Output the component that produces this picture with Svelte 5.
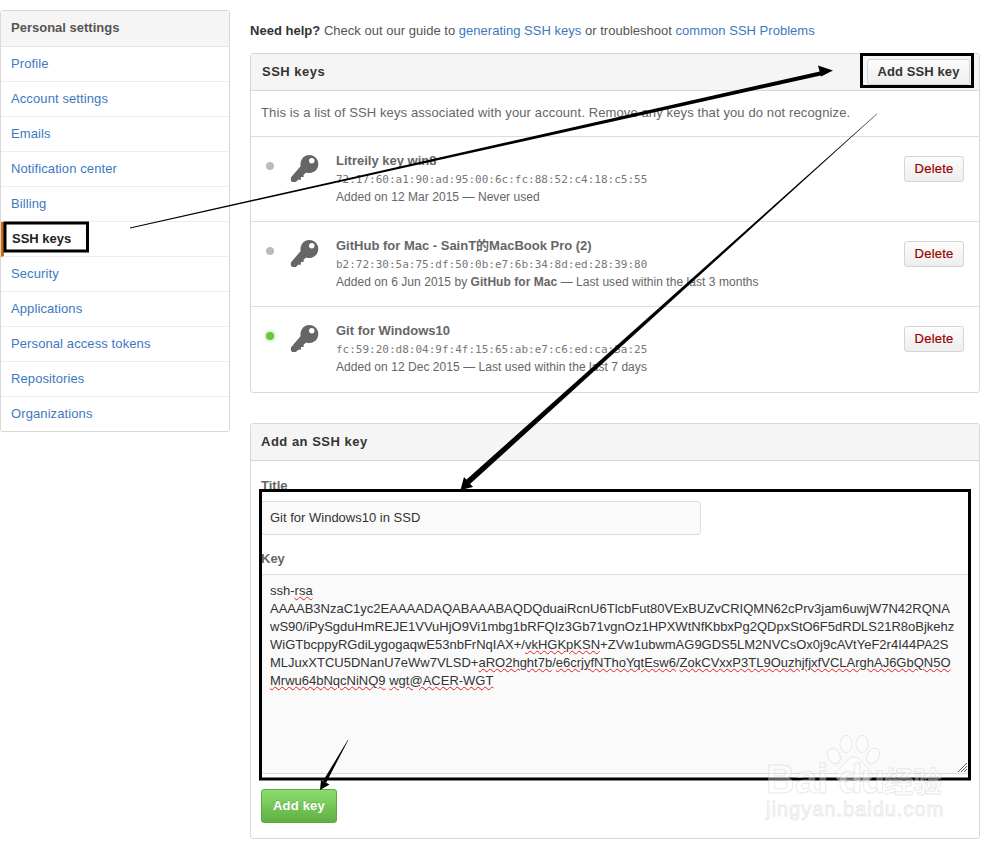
<script lang="ts">
  const navItems = [
    'Profile',
    'Account settings',
    'Emails',
    'Notification center',
    'Billing',
    'SSH keys',
    'Security',
    'Applications',
    'Personal access tokens',
    'Repositories',
    'Organizations',
  ];

  const keys = [
    { title: 'Litreily key win8', print: '72:17:60:a1:90:ad:95:00:6c:fc:88:52:c4:18:c5:55', before: 'Added on 12 Mar 2015 — Never used', by: '', after: '', active: false },
    { title: 'GitHub for Mac - SainT的MacBook Pro (2)', print: 'b2:72:30:5a:75:df:50:0b:e7:6b:34:8d:ed:28:39:80', before: 'Added on 6 Jun 2015 by ', by: 'GitHub for Mac', after: ' — Last used within the last 3 months', active: false },
    { title: 'Git for Windows10', print: 'fc:59:20:d8:04:9f:4f:15:65:ab:e7:c6:ed:ca:5a:25', before: 'Added on 12 Dec 2015 — Last used within the last 7 days', by: '', after: '', active: true },
  ];
</script>

<div class="page">
  <nav class="side">
    <h3>Personal settings</h3>
    {#each navItems as item}
      <a href="#top" class:selected={item === 'SSH keys'}>{item}</a>
    {/each}
  </nav>

  <main>
    <p class="help">
      <strong>Need help?</strong> Check out our guide to <a href="#top">generating SSH keys</a> or troubleshoot <a href="#top">common SSH Problems</a>
    </p>

    <section class="panel keys">
      <header>
        <h3>SSH keys</h3>
        <button class="btn add">Add SSH key</button>
      </header>
      <p class="intro">This is a list of SSH keys associated with your account. Remove any keys that you do not recognize.</p>
      {#each keys as key}
        <div class="key-row">
          <span class="dot" class:on={key.active}></span>
          <svg class="key-icon" viewBox="0 0 32 32">
            <path d="M21 1a10 10 0 1 1-3.200 19.400L15 23v2.500h-3V28.500H9L6.500 31H2.500L1 29.500V26L11.800 13.200A10 10 0 0 1 21 1z" fill="#666" />
            <circle cx="24" cy="7.500" r="3" fill="#fff" />
          </svg>
          <div class="key-info">
            <strong>{key.title}</strong>
            <code>{key.print}</code>
            <span class="meta">{key.before}{#if key.by}<b>{key.by}</b>{/if}{key.after}</span>
          </div>
          <button class="btn delete">Delete</button>
        </div>
      {/each}
    </section>

    <section class="panel form">
      <header>
        <h3>Add an SSH key</h3>
      </header>
      <div class="fields">
        <label for="key-title">Title</label>
        <input id="key-title" type="text" value="Git for Windows10 in SSD" />
        <span class="label">Key</span>
        <div class="textarea">
          <div>ssh-<u>rsa</u></div>
          <div>AAAAB3NzaC1yc2EAAAADAQABAAABAQDQduaiRcnU6TlcbFut80VExBUZvCRIQMN62cPrv3jam6uwjW7N42RQNA</div>
          <div>wS90/iPySgduHmREJE1VVuHjO9Vi1mbg1bRFQIz3Gb71vgnOz1HPXWtNfKbbxPg2QDpxStO6F5dRDLS21R8oBjkehz</div>
          <div>WiGTbcppyRGdiLygogaqwE53nbFrNqIAX+/<u>vkHGKpKSN</u>+ZVw1ubwmAG9GDS5LM2NVCsOx0j9cAVtYeF2r4I44PA2S</div>
          <div>MLJuxXTCU5DNanU7eWw7VLSD+<u>aRO2hght7b</u>/<u>e6crjyfNThoYqtEsw6</u>/<u>ZokCVxxP3TL9OuzhjfjxfVCLArghAJ6GbQN5O</u></div>
          <div><u>Mrwu64bNqcNiNQ9</u> <u>wgt@ACER-WGT</u></div>
          <svg class="grip" viewBox="0 0 10 10">
            <path d="M10 1 1 10M10 4 4 10M10 7 7 10" stroke="#666" stroke-width="1" fill="none" />
          </svg>
        </div>
        <button class="btn green">Add key</button>
      </div>
    </section>
  </main>

  <!-- annotations drawn on top of the screenshot -->
  <svg class="marks" viewBox="0 0 999 843">
    <rect x="5" y="223" width="82.500" height="28" />
    <rect x="861.500" y="54.500" width="111" height="32" />
    <rect x="260.500" y="490.500" width="709" height="288.500" />
    <polygon class="ink" points="130,227.500 130,228.500 823,75 822,71" />
    <polygon class="ink" points="833,70.500 818,65.500 821,76.500" />
    <polygon class="thin" points="877,113.500 877.300,113.800 470,484 466,480" />
    <polygon class="ink" points="460.500,490 464,477 473,487" />
    <polygon class="thin" points="347.800,740 348.200,740.300 326,783 323,781" />
    <polygon class="ink" points="320,790 321,780 329.500,784.500" />
  </svg>

  <div class="baidu">
    <div class="mark">
      <span>Bai</span>
      <svg viewBox="0 0 54 50">
        <ellipse cx="8" cy="21" rx="6" ry="8" transform="rotate(-25 8 21)" />
        <ellipse cx="20" cy="9" rx="6" ry="8.500" />
        <ellipse cx="36" cy="9" rx="6" ry="8.500" />
        <ellipse cx="47" cy="21" rx="6" ry="8" transform="rotate(25 47 21)" />
        <path d="M28 22c-7 0-9 8-15 12-6 5-3 13 5 13 4 0 7-2 10-2s6 2 10 2c8 0 11-8 5-13-6-4-8-12-15-12z" />
      </svg>
      <span class="du">du</span>
      <span class="cn">经验</span>
    </div>
    <div class="url">jingyan.baidu.com</div>
  </div>
</div>

<style>
  :global(body) {
    margin: 0;
    background: #fff;
  }

  .page {
    position: relative;
    width: 999px;
    height: 843px;
    overflow: hidden;
    display: flex;
    align-items: flex-start;
    gap: 20px;
    padding: 10px 0 0 0;
    box-sizing: border-box;
    font: 13px/1.4 "Liberation Sans", Arial, sans-serif;
    color: #666;
  }

  a {
    color: #4078c0;
    text-decoration: none;
  }

  h3 {
    margin: 0;
    font-size: 13px;
    font-weight: 700;
    color: #444;
  }

  .side {
    width: 230px;
    box-sizing: border-box;
    border: 1px solid #d8d8d8;
    border-radius: 3px;
    display: flex;
    flex-direction: column;
  }

  .side h3 {
    height: 36px;
    line-height: 34px;
    padding-left: 10px;
    box-sizing: border-box;
    background: #f5f5f5;
    border-bottom: 1px solid #e5e5e5;
    color: #555;
  }

  .side a {
    height: 35px;
    line-height: 33px;
    padding-left: 10px;
    box-sizing: border-box;
    border-bottom: 1px solid #eee;
    letter-spacing: 0.1px;
  }

  .side a:last-child {
    border-bottom: 0;
    height: 34px;
  }

  .side a.selected {
    padding-left: 8px;
    border-left: 3px solid #d26911;
    font-weight: 700;
    color: #222;
    letter-spacing: 0;
  }

  main {
    width: 730px;
    display: flex;
    flex-direction: column;
  }

  .help {
    margin: 0;
    height: 43px;
    line-height: 41px;
    color: #555;
    letter-spacing: 0.02px;
  }

  .help strong {
    color: #333;
  }

  .panel {
    border: 1px solid #d8d8d8;
    border-radius: 3px;
  }

  .panel + .panel {
    margin-top: 30px;
  }

  .panel header {
    display: flex;
    align-items: center;
    justify-content: space-between;
    height: 37px;
    box-sizing: border-box;
    padding: 0 9px 0 11px;
    background: #f5f5f5;
    border-bottom: 1px solid #d8d8d8;
  }

  .panel.form header {
    padding-left: 10px;
  }

  .panel header h3 {
    color: #333;
    letter-spacing: 0.5px;
  }

  .btn {
    font: 700 13px "Liberation Sans", Arial, sans-serif;
    border: 1px solid #d5d5d5;
    border-radius: 3px;
    background: linear-gradient(#fcfcfc, #eee);
    padding: 0 0 1px;
    color: #333;
  }

  .add {
    width: 103px;
    height: 26px;
    letter-spacing: 0.1px;
  }

  .intro {
    margin: 0;
    height: 46px;
    line-height: 44px;
    padding-left: 10px;
    box-sizing: border-box;
    border-bottom: 1px solid #ddd;
    color: #666;
    letter-spacing: 0.12px;
  }

  .key-row {
    display: flex;
    align-items: flex-start;
    height: 85px;
    box-sizing: border-box;
    border-bottom: 1px solid #ddd;
    padding-right: 15px;
  }

  .key-row:last-child {
    border-bottom: 0;
  }

  .dot {
    width: 8px;
    height: 8px;
    margin: 25px 0 0 15px;
    border-radius: 50%;
    background: #bbb;
    flex: none;
  }

  .dot.on {
    background: #6cc644;
    box-shadow: 0 0 4px rgba(108, 198, 68, 0.7);
  }

  .key-icon {
    width: 29px;
    height: 29px;
    margin: 17px 2px 0 16px;
    flex: none;
  }

  .key-info {
    flex: 1;
    margin: 15px 0 0 15px;
    display: flex;
    flex-direction: column;
    line-height: 18px;
  }

  .key-info strong {
    color: #666;
    font-size: 13px;
    font-family: "Liberation Sans", "Noto Sans CJK SC", sans-serif;
  }

  .key-info code {
    font: 11px/18px "DejaVu Sans Mono", monospace;
    color: #777;
    margin-top: 1px;
  }

  .meta {
    font-size: 12px;
    letter-spacing: 0.05px;
    line-height: 18px;
    margin-top: -1px;
  }

  .delete {
    width: 60px;
    height: 26px;
    margin-top: 19px;
    color: #900;
    font-weight: 400;
    letter-spacing: 0.2px;
    -webkit-text-stroke: 0.2px #900;
  }

  .fields {
    display: flex;
    flex-direction: column;
    align-items: flex-start;
    padding: 14px 10px 0;
    height: 377px;
    box-sizing: border-box;
    font-weight: 700;
  }

  label,
  .label {
    font-weight: 700;
    line-height: 22px;
    height: 26px;
    color: #666;
  }

  input {
    width: 440px;
    height: 34px;
    box-sizing: border-box;
    border: 1px solid #ddd;
    border-radius: 3px;
    background: #fafafa;
    padding: 0 8px 2px;
    font: 13px "Liberation Sans", Arial, sans-serif;
    color: #333;
    outline: none;
    margin-bottom: 15px;
  }

  .label {
    height: 24px;
    line-height: 18px;
  }

  .textarea {
    position: relative;
    width: 708px;
    height: 200px;
    box-sizing: border-box;
    border: 1px solid #ddd;
    border-radius: 3px;
    background: #fafafa;
    padding: 7px 8px;
    font-weight: 400;
    font-size: 13px;
    line-height: 18px;
    color: #333;
    white-space: nowrap;
  }

  .textarea u {
    text-decoration: underline wavy #e02020 1px;
    text-underline-offset: 1px;
  }

  .grip {
    position: absolute;
    right: 1px;
    bottom: 1px;
    width: 10px;
    height: 10px;
  }

  .green {
    width: 76px;
    height: 34px;
    margin-top: 15px;
    color: #fff;
    border-color: #5ca941;
    background: linear-gradient(#8add6d, #60b044);
    text-shadow: 0 -1px 0 rgba(0, 0, 0, 0.15);
    letter-spacing: 0.2px;
  }

  .marks {
    position: absolute;
    left: 0;
    top: 0;
    width: 999px;
    height: 843px;
    pointer-events: none;
  }

  .marks rect {
    fill: none;
    stroke: #000;
    stroke-width: 3;
  }

  .marks .ink,
  .marks .thin {
    fill: #000;
  }

  .baidu {
    position: absolute;
    left: 766px;
    top: 735px;
    width: 190px;
    color: rgba(255, 255, 255, 0.35);
    -webkit-text-stroke: 1px rgba(200, 200, 200, 0.4);
    pointer-events: none;
  }

  .mark {
    display: flex;
    align-items: flex-end;
    height: 64px;
    font: 700 40px/40px "Liberation Sans", sans-serif;
  }

  .mark svg {
    width: 54px;
    height: 50px;
    margin: 0 -42px 14px -2px;
    fill: rgba(255, 255, 255, 0.4);
    stroke: rgba(200, 200, 200, 0.4);
    stroke-width: 1;
    flex: none;
  }

  .du {
    letter-spacing: -2px;
  }

  .cn {
    margin-left: 1px;
    font: 700 29px/38px "Noto Sans CJK SC", sans-serif;
  }

  .url {
    font: 20px/20px "Liberation Sans", sans-serif;
    letter-spacing: 1px;
  }
</style>
